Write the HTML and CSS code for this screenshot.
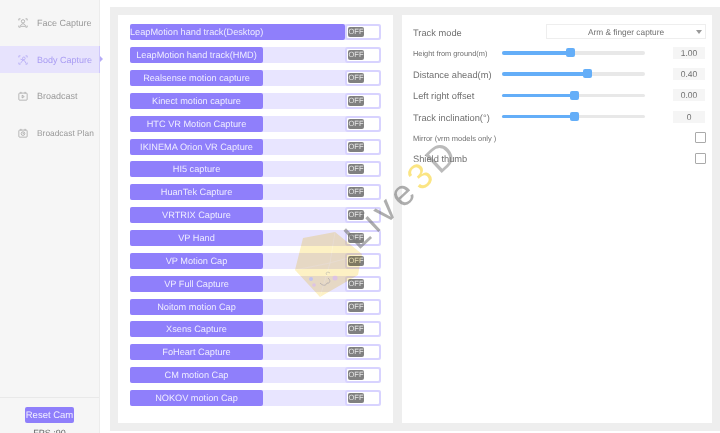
FILE: index.html
```html
<!DOCTYPE html>
<html>
<head>
<meta charset="utf-8">
<title>Body Capture</title>
<link rel="stylesheet" href="styles.css">
</head>
<body>
<div class="app">
  <aside class="sidebar">
    <nav class="nav">
      <div class="nav-item">
        <svg class="nav-icon" viewBox="0 0 12 12"><path d="M1 3V1h2M9 1h2v2M11 9v2H9M3 11H1V9"/><circle cx="6" cy="4" r="2"/><path d="M3 10c0-4 6-4 6 0z"/></svg>
        <span>Face Capture</span>
      </div>
      <div class="nav-item active">
        <svg class="nav-icon" viewBox="0 0 12 12"><path d="M1 3V1h2M9 1h2v2M11 9v2H9M3 11H1V9"/><circle cx="7" cy="4" r="1.6"/><path d="M3 10l3-4 2 1 1.500 3M3 5l3 1"/></svg>
        <span>Body Capture</span>
      </div>
      <div class="nav-item">
        <svg class="nav-icon" viewBox="0 0 12 12"><rect x="1" y="2.500" width="10" height="8.500" rx="1"/><path d="M3.500 1v2M8.500 1v2M5 5l2.500 1.700L5 8.400z"/></svg>
        <span>Broadcast</span>
      </div>
      <div class="nav-item plan">
        <svg class="nav-icon" viewBox="0 0 12 12"><rect x="1" y="2.500" width="10" height="8.500" rx="1"/><path d="M3.500 1v2M8.500 1v2"/><circle cx="6" cy="6.700" r="2.200"/><path d="M6 5.500v1.300h1"/></svg>
        <span>Broadcast Plan</span>
      </div>
    </nav>
    <div class="side-foot">
      <button class="reset">Reset Cam</button>
      <div class="fps">FPS :90</div>
    </div>
  </aside>
  <main class="main">
    <section class="panel list">
      <div class="row wide"><span class="tag">LeapMotion hand track(Desktop)</span><span class="toggle"><b>OFF</b></span></div>
      <div class="row"><span class="tag">LeapMotion hand track(HMD)</span><span class="toggle"><b>OFF</b></span></div>
      <div class="row"><span class="tag">Realsense motion capture</span><span class="toggle"><b>OFF</b></span></div>
      <div class="row"><span class="tag">Kinect motion capture</span><span class="toggle"><b>OFF</b></span></div>
      <div class="row"><span class="tag">HTC VR Motion Capture</span><span class="toggle"><b>OFF</b></span></div>
      <div class="row"><span class="tag">IKINEMA Orion VR Capture</span><span class="toggle"><b>OFF</b></span></div>
      <div class="row"><span class="tag">HI5 capture</span><span class="toggle"><b>OFF</b></span></div>
      <div class="row"><span class="tag">HuanTek Capture</span><span class="toggle"><b>OFF</b></span></div>
      <div class="row"><span class="tag">VRTRIX Capture</span><span class="toggle"><b>OFF</b></span></div>
      <div class="row"><span class="tag">VP Hand</span><span class="toggle"><b>OFF</b></span></div>
      <div class="row"><span class="tag">VP Motion Cap</span><span class="toggle"><b>OFF</b></span></div>
      <div class="row"><span class="tag">VP Full Capture</span><span class="toggle"><b>OFF</b></span></div>
      <div class="row"><span class="tag">Noitom motion Cap</span><span class="toggle"><b>OFF</b></span></div>
      <div class="row"><span class="tag">Xsens Capture</span><span class="toggle"><b>OFF</b></span></div>
      <div class="row"><span class="tag">FoHeart Capture</span><span class="toggle"><b>OFF</b></span></div>
      <div class="row"><span class="tag">CM motion Cap</span><span class="toggle"><b>OFF</b></span></div>
      <div class="row"><span class="tag">NOKOV motion Cap</span><span class="toggle"><b>OFF</b></span></div>
    </section>
    <section class="panel settings">
      <div class="set-row mode">
        <span class="lbl">Track mode</span>
        <div class="select"><span>Arm &amp; finger capture</span><i class="caret"></i></div>
      </div>
      <div class="set-row slide">
        <span class="lbl small">Height from ground(m)</span>
        <div class="slider"><div class="fill" style="width:47.9%"><i class="thumb"></i></div></div>
        <span class="val">1.00</span>
      </div>
      <div class="set-row slide">
        <span class="lbl">Distance ahead(m)</span>
        <div class="slider"><div class="fill" style="width:60%"><i class="thumb"></i></div></div>
        <span class="val">0.40</span>
      </div>
      <div class="set-row slide">
        <span class="lbl">Left right offset</span>
        <div class="slider"><div class="fill" style="width:51%"><i class="thumb"></i></div></div>
        <span class="val">0.00</span>
      </div>
      <div class="set-row slide">
        <span class="lbl">Track inclination(°)</span>
        <div class="slider"><div class="fill" style="width:51%"><i class="thumb"></i></div></div>
        <span class="val">0</span>
      </div>
      <div class="set-row check">
        <span class="lbl tiny">Mirror (vrm models only )</span>
        <i class="box"></i>
      </div>
      <div class="set-row check">
        <span class="lbl">Shield thumb</span>
        <i class="box"></i>
      </div>
    </section>
  </main>
  <div class="mark">
    <svg class="cube" viewBox="0 0 70 70"><path class="cube-a" d="M10 8L42 2l27 22-4 21-38 22L2 40z"/><path class="cube-l" d="M42 2l-5 31 32-9M37 33L2 40M37 33l-10 34"/><circle class="eye-b" cx="18" cy="49" r="2"/><circle class="eye-p" cx="42" cy="48" r="2.500"/><circle class="eye-p" cx="21" cy="55" r="1.800"/><path class="face" d="M37 43c-3-2-5 0-3 2M27 53c3 3 6 3 7 0 3 1 4-3 1-5"/></svg>
    <div class="mark-text">Live<em>3</em><u>D</u></div>
  </div>
</div>
</body>
</html>
```
FILE: styles.css
```css
* { box-sizing: border-box; }
html, body { margin: 0; padding: 0; height: 100%; overflow: hidden; background: #fff; }
body { font-family: "Liberation Sans", Arial, sans-serif; color: #666; text-rendering: geometricPrecision; }
.app { position: relative; display: flex; width: 720px; height: 433px; overflow: hidden; filter: blur(0.3px); }

.sidebar { width: 100px; flex: none; display: flex; flex-direction: column; background: #f6f6f6; border-right: 1px solid #ececec; }
.nav { flex: 1; padding-top: 9.500px; display: flex; flex-direction: column; gap: 9.500px; }
.nav-item { position: relative; height: 27px; display: flex; align-items: center; gap: 9px; padding-left: 18px; font-size: 9px; color: #9a9a9a; white-space: nowrap; }
.nav-item.plan { font-size: 8.400px; }
.nav-item.active { background: #e7e3fd; color: #a99cf3; border-right: 1px solid #cfc8fb; margin-right: -1px; }
.nav-item.active::after { content: ""; position: absolute; right: -4px; top: 10px; border-left: 3px solid #b6abf7; border-top: 3px solid transparent; border-bottom: 3px solid transparent; }
.nav-icon { width: 10px; height: 10px; flex: none; fill: none; stroke: #999; stroke-width: 0.8; }
.active .nav-icon { stroke: #ab9ff5; }
.side-foot { height: 36px; flex: none; border-top: 1px solid #e9e9e9; display: flex; flex-direction: column; align-items: center; padding-top: 9px; }
.reset { flex: none; width: 49px; height: 16px; border: 0; border-radius: 2px; padding: 0; background: #8f7ffb; color: #f1efff; font: 9.500px "Liberation Sans", Arial, sans-serif; text-rendering: geometricPrecision; }
.fps { flex: none; margin-top: 5px; font-size: 9px; line-height: 11px; color: #666; }

.main { margin: 7px 0 2px 10px; flex: 1; display: flex; gap: 9px; background: #eee; padding: 8px; }
.panel { background: #fff; }
.list { width: 275px; flex: none; padding: 9.300px 12px 0; display: flex; flex-direction: column; gap: 6.860px; }
.row { height: 16px; display: flex; background: #e8e5ff; border-radius: 2px; width: 251px; }
.tag { width: 133px; flex: none; background: #8f7ffb; color: #efedff; font-size: 9.200px; line-height: 16px; text-align: center; border-radius: 2px; white-space: nowrap; }
.row.wide .tag { width: 215px; text-align: left; }
.toggle { margin-left: auto; width: 36px; height: 16px; flex: none; background: #fff; border: 2px solid #d8d3ff; border-radius: 3px; padding-left: 1px; display: flex; align-items: center; }
.toggle b { width: 16px; height: 10px; background: #808080; color: #e6e6e6; border-radius: 2px; font-size: 7.500px; font-weight: 400; line-height: 10px; text-align: center; }

.settings { flex: 1; padding: 9.300px 6px 0 11px; display: flex; flex-direction: column; }
.set-row { display: flex; align-items: center; }
.lbl { font-size: 9.300px; color: #707070; white-space: nowrap; padding-top: 2px; }
.small { font-size: 7.400px; }
.tiny { font-size: 7.500px; }
.mode { height: 15px; justify-content: space-between; margin-bottom: 7px; }
.select { width: 160px; height: 15px; border: 1px solid #eee; display: flex; align-items: center; justify-content: center; position: relative; font-size: 8.300px; color: #707070; }
.caret { position: absolute; right: 3px; top: 5px; border-top: 4px solid #999; border-left: 3px solid transparent; border-right: 3px solid transparent; }
.slide { height: 13px; margin-bottom: 8.250px; }
.slide .lbl { width: 89px; }
.slider { width: 143px; height: 3.500px; background: #e8e8e8; border-radius: 2px; }
.fill { position: relative; height: 100%; background: #64aef8; border-radius: 2px; }
.thumb { position: absolute; right: -4.500px; top: -3px; width: 9px; height: 9px; background: #64aef8; border-radius: 2px; }
.val { margin-left: 28px; width: 32px; height: 12px; background: #f5f5f5; font-size: 8.500px; line-height: 12px; text-align: center; color: #707070; }
.check { height: 12px; justify-content: space-between; margin-bottom: 9px; }
.box { width: 11px; height: 11px; border: 1px solid #aaa; border-radius: 1px; background: #fff; }

.mark { position: absolute; inset: 0; pointer-events: none; }
.cube { position: absolute; left: 293px; top: 230px; width: 70px; height: 70px; mix-blend-mode: multiply; }
.cube-a { fill: #fdf1c4; }
.cube-l { fill: none; stroke: #fff6d8; stroke-width: 0.6; }
.eye-b { fill: #d5d8f0; }
.eye-p { fill: #f3d9e4; }
.cube .face { fill: none; stroke: #c9c4b0; stroke-width: 0.9; }
.mark-text { position: absolute; left: 350px; top: 222px; transform: rotate(-43deg); transform-origin: left center; font-size: 36px; letter-spacing: 5px; line-height: 40px; color: rgba(120,120,120,.6); white-space: nowrap; }
.mark-text em { font-style: normal; color: rgba(250,220,90,.75); }
.mark-text u { text-decoration: none; color: rgba(120,120,120,.5); }
```
